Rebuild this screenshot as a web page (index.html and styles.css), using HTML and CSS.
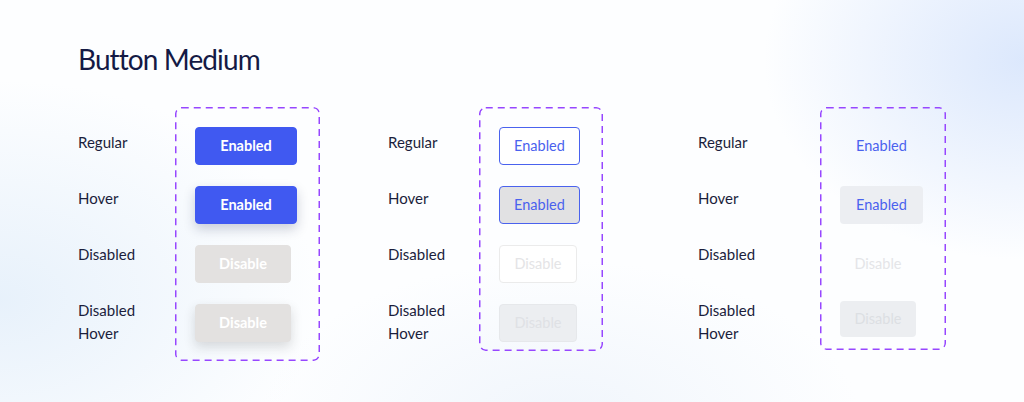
FILE: index.html
```html
<!DOCTYPE html>
<html lang="en">
<head>
<meta charset="utf-8">
<title>Button Medium</title>
<link rel="stylesheet" href="styles.css">
</head>
<body>
<main class="page">
  <h1 class="title">Button Medium</h1>
  <div class="groups">
    <section class="group group-primary">
      <div class="labels">
        <span class="label">Regular</span>
        <span class="label">Hover</span>
        <span class="label">Disabled</span>
        <span class="label">Disabled<br>Hover</span>
      </div>
      <div class="box">
        <button class="btn primary">Enabled</button>
        <button class="btn primary hover">Enabled</button>
        <button class="btn primary disabled">Disable</button>
        <button class="btn primary disabled hover">Disable</button>
      </div>
    </section>
    <section class="group group-outline">
      <div class="labels">
        <span class="label">Regular</span>
        <span class="label">Hover</span>
        <span class="label">Disabled</span>
        <span class="label">Disabled<br>Hover</span>
      </div>
      <div class="box">
        <button class="btn outline">Enabled</button>
        <button class="btn outline hover">Enabled</button>
        <button class="btn outline disabled">Disable</button>
        <button class="btn outline disabled hover">Disable</button>
      </div>
    </section>
    <section class="group group-ghost">
      <div class="labels">
        <span class="label">Regular</span>
        <span class="label">Hover</span>
        <span class="label">Disabled</span>
        <span class="label">Disabled<br>Hover</span>
      </div>
      <div class="box">
        <button class="btn ghost">Enabled</button>
        <button class="btn ghost hover">Enabled</button>
        <button class="btn ghost disabled">Disable</button>
        <button class="btn ghost disabled hover">Disable</button>
      </div>
    </section>
  </div>
</main>
</body>
</html>
```

FILE: styles.css
```css
* { box-sizing: border-box; }

html, body {
  margin: 0;
  width: 1024px;
  height: 402px;
  overflow: hidden;
}

body {
  font-family: Lato, "Noto Sans", sans-serif;
  color: #1b1e3c;
  background:
    radial-gradient(ellipse 260px 200px at 1024px 60px, rgba(214, 228, 252, 0.85), rgba(214, 228, 252, 0) 100%),
    radial-gradient(ellipse 320px 220px at 0px 300px, rgba(226, 238, 250, 0.8), rgba(226, 238, 250, 0) 100%),
    radial-gradient(ellipse 300px 160px at 560px 420px, rgba(232, 240, 250, 0.6), rgba(232, 240, 250, 0) 100%),
    #fdfeff;
}

.page {
  padding: 40px 0 0 78px;
}

.title {
  margin: 0;
  font-size: 28px;
  font-weight: 400;
  line-height: 38px;
  color: #141a45;
  letter-spacing: -0.9px;
}

.groups {
  display: grid;
  grid-template-columns: 310px 310px 310px;
  margin-top: 29px;
  align-items: start;
}

.group {
  display: flex;
  align-items: flex-start;
}

.labels {
  display: flex;
  flex-direction: column;
  gap: 33px;
  padding-top: 24px;
}

.group-primary .labels { width: 97px; }
.group-outline .labels { width: 91px; }
.group-ghost .labels { width: 122px; }

.label {
  font-size: 15px;
  line-height: 23px;
  color: #1b1e3c;
}

.box {
  display: flex;
  flex-direction: column;
  align-items: flex-start;
  gap: 21px;
  padding: 20px 23px 9px 20px;
  border-radius: 6px;
  background-image: url("data:image/svg+xml,%3Csvg xmlns='http://www.w3.org/2000/svg' width='100%25' height='100%25'%3E%3Crect x='0.75' y='0.75' width='calc(100%25 - 1.5px)' height='calc(100%25 - 1.5px)' rx='6' ry='6' fill='none' stroke='%239747FF' stroke-width='1.5' stroke-dasharray='7 5'/%3E%3C/svg%3E");
}

.group-primary .box { padding-bottom: 19px; }
.group-ghost .box { padding-bottom: 13px; }

.btn {
  height: 38px;
  border: 1px solid transparent;
  border-radius: 4px;
  font-family: Lato, "Noto Sans", sans-serif;
  font-size: 14.5px;
  line-height: 20px;
  padding: 0;
  cursor: default;
  text-align: center;
}

/* primary */
.btn.primary {
  width: 102px;
  background: #4059f1;
  border-color: #4059f1;
  color: #ffffff;
  font-weight: 700;
}
.btn.primary.hover {
  box-shadow: 0 5px 12px rgba(30, 40, 80, 0.22);
}
.btn.primary.disabled {
  width: 96px;
  background: #e3e1e0;
  border-color: #e3e1e0;
  color: #ffffff;
}
.btn.primary.disabled.hover {
  box-shadow: 0 5px 12px rgba(40, 40, 40, 0.16);
}

/* outline */
.btn.outline {
  width: 81px;
  background: #ffffff;
  border-color: #4a62ee;
  color: #4a62ee;
}
.btn.outline.hover {
  background: #e1e1e3;
}
.btn.outline.disabled {
  width: 78px;
  background: #ffffff;
  border-color: #ebebeb;
  color: #e4e4e6;
}
.btn.outline.disabled.hover {
  background: #eceef1;
  border-color: #e6e8eb;
  color: #dfe1e5;
}

/* ghost */
.btn.ghost {
  width: 83px;
  background: transparent;
  color: #4a62ee;
}
.btn.ghost.hover {
  background: #eceef2;
}
.btn.ghost.disabled {
  width: 76px;
  color: #e4e5e8;
}
.btn.ghost.disabled.hover {
  height: 36px;
  margin-top: -3px;
  background: #eceef1;
  color: #dcdfe3;
}
```
